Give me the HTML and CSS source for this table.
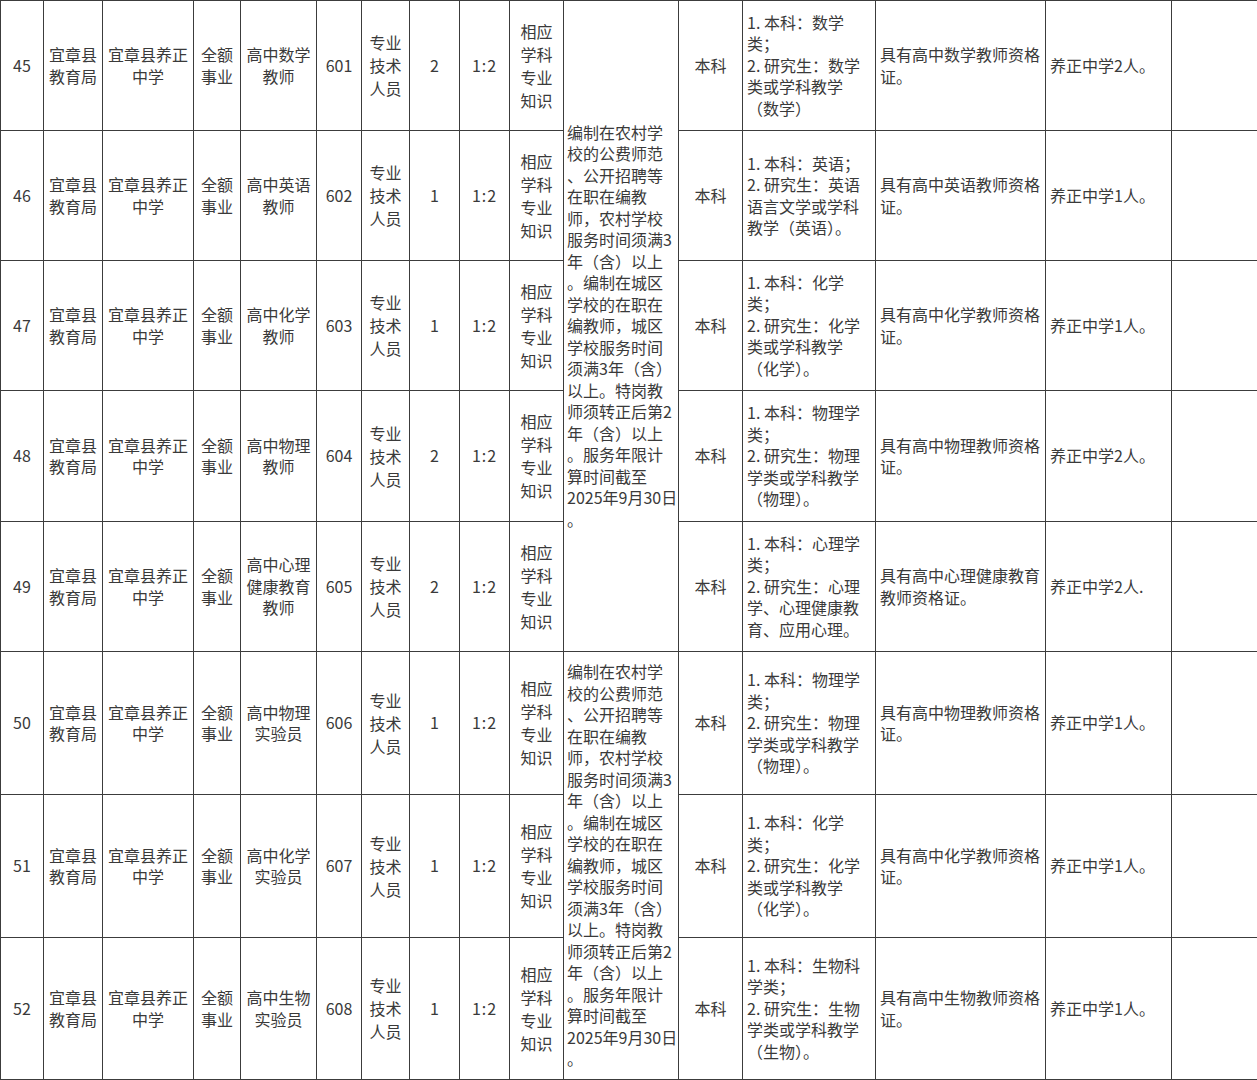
FILE: index.html
```html
<!DOCTYPE html>
<html lang="zh-CN">
<head>
<meta charset="utf-8">
<title>岗位表</title>
<link rel="stylesheet" href="styles.css">
</head>
<body>
<table class="grid">
<colgroup>
<col class="w43"><col class="w59"><col class="w91"><col class="w47"><col class="w76"><col class="w45"><col class="w48"><col class="w50"><col class="w50"><col class="w54"><col class="w115"><col class="w64"><col class="w133"><col class="w170"><col class="w126"><col class="w86">
</colgroup>
<tbody>
<tr class="r130">
<td class="c">45</td>
<td class="c">宜章县<br>教育局</td>
<td class="c">宜章县养正<br>中学</td>
<td class="c">全额<br>事业</td>
<td class="c">高中数学<br>教师</td>
<td class="c">601</td>
<td class="c t">专业<br>技术<br>人员</td>
<td class="c">2</td>
<td class="c ratio">1:2</td>
<td class="c t">相应<br>学科<br>专业<br>知识</td>
<td class="l note" rowspan="5">编制在农村学<br>校的公费师范<br>、公开招聘等<br>在职在编教<br>师，农村学校<br>服务时间须满3<br>年（含）以上<br>。编制在城区<br>学校的在职在<br>编教师，城区<br>学校服务时间<br>须满3年（含）<br>以上。特岗教<br>师须转正后第2<br>年（含）以上<br>。服务年限计<br>算时间截至<br>2025年9月30日<br>。</td>
<td class="c">本科</td>
<td class="l">1. 本科：数学<br>类；<br>2. 研究生：数学<br>类或学科教学<br>（数学）</td>
<td class="l">具有高中数学教师资格<br>证。</td>
<td class="l">养正中学2人。</td>
<td></td>
</tr>
<tr class="r130">
<td class="c">46</td>
<td class="c">宜章县<br>教育局</td>
<td class="c">宜章县养正<br>中学</td>
<td class="c">全额<br>事业</td>
<td class="c">高中英语<br>教师</td>
<td class="c">602</td>
<td class="c t">专业<br>技术<br>人员</td>
<td class="c">1</td>
<td class="c ratio">1:2</td>
<td class="c t">相应<br>学科<br>专业<br>知识</td>
<td class="c">本科</td>
<td class="l">1. 本科：英语；<br>2. 研究生：英语<br>语言文学或学科<br>教学（英语）。</td>
<td class="l">具有高中英语教师资格<br>证。</td>
<td class="l">养正中学1人。</td>
<td></td>
</tr>
<tr class="r130">
<td class="c">47</td>
<td class="c">宜章县<br>教育局</td>
<td class="c">宜章县养正<br>中学</td>
<td class="c">全额<br>事业</td>
<td class="c">高中化学<br>教师</td>
<td class="c">603</td>
<td class="c t">专业<br>技术<br>人员</td>
<td class="c">1</td>
<td class="c ratio">1:2</td>
<td class="c t">相应<br>学科<br>专业<br>知识</td>
<td class="c">本科</td>
<td class="l">1. 本科：化学<br>类；<br>2. 研究生：化学<br>类或学科教学<br>（化学）。</td>
<td class="l">具有高中化学教师资格<br>证。</td>
<td class="l">养正中学1人。</td>
<td></td>
</tr>
<tr class="r131">
<td class="c">48</td>
<td class="c">宜章县<br>教育局</td>
<td class="c">宜章县养正<br>中学</td>
<td class="c">全额<br>事业</td>
<td class="c">高中物理<br>教师</td>
<td class="c">604</td>
<td class="c t">专业<br>技术<br>人员</td>
<td class="c">2</td>
<td class="c ratio">1:2</td>
<td class="c t">相应<br>学科<br>专业<br>知识</td>
<td class="c">本科</td>
<td class="l">1. 本科：物理学<br>类；<br>2. 研究生：物理<br>学类或学科教学<br>（物理）。</td>
<td class="l">具有高中物理教师资格<br>证。</td>
<td class="l">养正中学2人。</td>
<td></td>
</tr>
<tr class="r130">
<td class="c">49</td>
<td class="c">宜章县<br>教育局</td>
<td class="c">宜章县养正<br>中学</td>
<td class="c">全额<br>事业</td>
<td class="c">高中心理<br>健康教育<br>教师</td>
<td class="c">605</td>
<td class="c t">专业<br>技术<br>人员</td>
<td class="c">2</td>
<td class="c ratio">1:2</td>
<td class="c t">相应<br>学科<br>专业<br>知识</td>
<td class="c">本科</td>
<td class="l">1. 本科：心理学<br>类；<br>2. 研究生：心理<br>学、心理健康教<br>育、应用心理。</td>
<td class="l">具有高中心理健康教育<br>教师资格证。</td>
<td class="l">养正中学2人.</td>
<td></td>
</tr>
<tr class="r143">
<td class="c">50</td>
<td class="c">宜章县<br>教育局</td>
<td class="c">宜章县养正<br>中学</td>
<td class="c">全额<br>事业</td>
<td class="c">高中物理<br>实验员</td>
<td class="c">606</td>
<td class="c t">专业<br>技术<br>人员</td>
<td class="c">1</td>
<td class="c ratio">1:2</td>
<td class="c t">相应<br>学科<br>专业<br>知识</td>
<td class="l note" rowspan="3">编制在农村学<br>校的公费师范<br>、公开招聘等<br>在职在编教<br>师，农村学校<br>服务时间须满3<br>年（含）以上<br>。编制在城区<br>学校的在职在<br>编教师，城区<br>学校服务时间<br>须满3年（含）<br>以上。特岗教<br>师须转正后第2<br>年（含）以上<br>。服务年限计<br>算时间截至<br>2025年9月30日<br>。</td>
<td class="c">本科</td>
<td class="l">1. 本科：物理学<br>类；<br>2. 研究生：物理<br>学类或学科教学<br>（物理）。</td>
<td class="l">具有高中物理教师资格<br>证。</td>
<td class="l">养正中学1人。</td>
<td></td>
</tr>
<tr class="r143">
<td class="c">51</td>
<td class="c">宜章县<br>教育局</td>
<td class="c">宜章县养正<br>中学</td>
<td class="c">全额<br>事业</td>
<td class="c">高中化学<br>实验员</td>
<td class="c">607</td>
<td class="c t">专业<br>技术<br>人员</td>
<td class="c">1</td>
<td class="c ratio">1:2</td>
<td class="c t">相应<br>学科<br>专业<br>知识</td>
<td class="c">本科</td>
<td class="l">1. 本科：化学<br>类；<br>2. 研究生：化学<br>类或学科教学<br>（化学）。</td>
<td class="l">具有高中化学教师资格<br>证。</td>
<td class="l">养正中学1人。</td>
<td></td>
</tr>
<tr class="r142">
<td class="c">52</td>
<td class="c">宜章县<br>教育局</td>
<td class="c">宜章县养正<br>中学</td>
<td class="c">全额<br>事业</td>
<td class="c">高中生物<br>实验员</td>
<td class="c">608</td>
<td class="c t">专业<br>技术<br>人员</td>
<td class="c">1</td>
<td class="c ratio">1:2</td>
<td class="c t">相应<br>学科<br>专业<br>知识</td>
<td class="c">本科</td>
<td class="l">1. 本科：生物科<br>学类；<br>2. 研究生：生物<br>学类或学科教学<br>（生物）。</td>
<td class="l">具有高中生物教师资格<br>证。</td>
<td class="l">养正中学1人。</td>
<td></td>
</tr>
</tbody>
</table>
</body>
</html>
```

FILE: styles.css
```css
html, body {
  margin: 0;
  padding: 0;
  background: #ffffff;
}

body {
  font-family: "Noto Sans CJK SC", "Noto Sans", sans-serif;
  font-size: 16px;
  color: #3a3a3a;
}

.grid {
  border-collapse: collapse;
  table-layout: fixed;
  width: 1257px;
}

.grid td {
  border: 1px solid #3c3c3c;
  padding: 0 4px;
  vertical-align: middle;
  line-height: 21.5px;
  white-space: nowrap;
  overflow: hidden;
}

.grid .c { text-align: center; }
.grid .l { text-align: left; }
.grid .t { line-height: 23px; }
.grid .ratio { letter-spacing: 1px; }
.grid .note { padding: 0 3px; }

.r130 { height: 130px; }
.r131 { height: 131px; }
.r143 { height: 143px; }
.r142 { height: 142px; }

.w43 { width: 43px; }
.w59 { width: 59px; }
.w91 { width: 91px; }
.w47 { width: 47px; }
.w76 { width: 76px; }
.w45 { width: 45px; }
.w48 { width: 48px; }
.w50 { width: 50px; }
.w54 { width: 54px; }
.w115 { width: 115px; }
.w64 { width: 64px; }
.w133 { width: 133px; }
.w170 { width: 170px; }
.w126 { width: 126px; }
.w86 { width: 86px; }
```
